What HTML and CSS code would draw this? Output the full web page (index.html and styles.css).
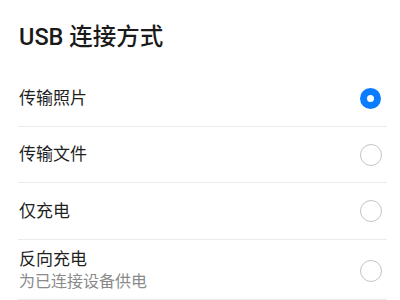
FILE: index.html
```html
<!DOCTYPE html>
<html lang="zh">
<head>
<meta charset="utf-8">
<link rel="stylesheet" href="styles.css">
</head>
<body>
<div class="page">
  <h1 class="title">USB 连接方式</h1>
  <ul class="list">
    <li class="row">
      <div class="text"><div class="main">传输照片</div></div>
      <span class="radio checked"></span>
    </li>
    <li class="row">
      <div class="text"><div class="main">传输文件</div></div>
      <span class="radio"></span>
    </li>
    <li class="row row-tall">
      <div class="text"><div class="main">仅充电</div></div>
      <span class="radio"></span>
    </li>
    <li class="row row-two">
      <div class="text"><div class="main">反向充电</div><div class="sub">为已连接设备供电</div></div>
      <span class="radio"></span>
    </li>
  </ul>
</div>
</body>
</html>
```
FILE: styles.css
```css
html, body {
  margin: 0;
  padding: 0;
  background: #ffffff;
}
body {
  font-family: Roboto, "Noto Sans CJK SC", sans-serif;
  width: 400px;
  height: 300px;
  overflow: hidden;
}
.page {
  padding: 0 13px 0 18px;
}
.title {
  margin: 0;
  padding: 22px 0 0 1px;
  box-sizing: border-box;
  height: 71px;
  font-size: 23.5px;
  line-height: 30px;
  font-weight: 500;
  color: #1a1a1a;
}
.list {
  list-style: none;
  margin: 0;
  padding: 0;
}
.row {
  display: flex;
  align-items: center;
  justify-content: space-between;
  height: 56px;
  box-sizing: border-box;
  border-bottom: 1px solid #ebebeb;
  padding: 0 5px 0 1px;
}
.row-tall {
  height: 57px;
}
.row-two {
  height: 60px;
  padding-top: 2px;
}
.main {
  font-size: 17px;
  line-height: 21px;
  color: #1f1f1f;
}
.sub {
  font-size: 16px;
  line-height: 21px;
  margin-top: 1px;
  color: #8a8a8a;
}
.radio {
  width: 22px;
  height: 22px;
  box-sizing: border-box;
  border-radius: 50%;
  border: 1.3px solid #c4c4c4;
  flex: none;
}
.radio.checked {
  width: 21px;
  height: 21px;
  margin-right: 1px;
  border: 7px solid #0a7cff;
}
```
